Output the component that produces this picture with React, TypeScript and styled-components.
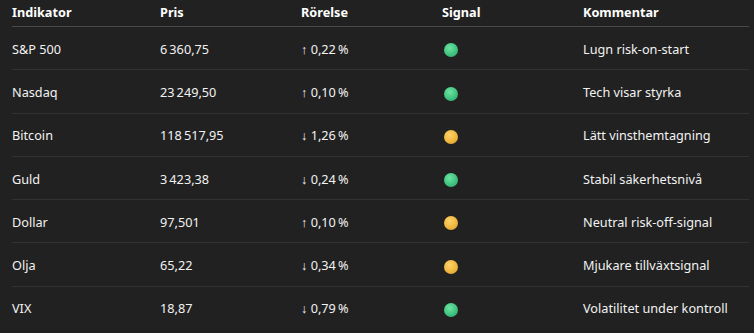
import React from "react";
import styled, { createGlobalStyle } from "styled-components";

const GlobalStyle = createGlobalStyle`
  html, body {
    margin: 0;
    padding: 0;
    background: #212121;
  }
  body {
    font-family: "Noto Sans", "Open Sans", sans-serif;
    color: #f2f2f2;
  }
`;

const Wrap = styled.div`
  padding: 0 5px 0 12px;
`;

const Table = styled.table`
  width: 737px;
  border-collapse: collapse;
  font-size: 12.7px;
  table-layout: fixed;
`;

const Th = styled.th<{ $w: number }>`
  width: ${(p) => p.$w}px;
  text-align: left;
  font-weight: 700;
  color: #ffffff;
  height: 26px;
  padding: 0;
  vertical-align: top;
  line-height: 24px;
  border-bottom: 1px solid #484848;
`;

const Td = styled.td`
  height: 41.3px;
  padding: 1px 0 0 0;
  line-height: 18px;
  vertical-align: middle;
  border-bottom: 1px solid #323232;

  tr:last-child > & {
    border-bottom: none;
  }
`;

const Arrow = styled.span`
  font-weight: 700;
`;

const Dot = styled.span<{ $tone: "green" | "yellow" }>`
  display: inline-block;
  width: 14px;
  height: 14px;
  margin-left: 2px;
  border-radius: 50%;
  vertical-align: middle;
  background: ${(p) =>
    p.$tone === "green"
      ? "radial-gradient(circle at 40% 35%, #6fe3a4 0%, #3fc47f 55%, #2a9e63 100%)"
      : "radial-gradient(circle at 40% 35%, #fcd36a 0%, #f0b63d 55%, #d39528 100%)"};
`;

type Row = {
  name: string;
  price: string;
  up: boolean;
  change: string;
  tone: "green" | "yellow";
  comment: string;
};

const rows: Row[] = [
  { name: "S&P 500", price: "6\u202F360,75", up: true, change: "0,22\u202F%", tone: "green", comment: "Lugn risk-on-start" },
  { name: "Nasdaq", price: "23\u202F249,50", up: true, change: "0,10\u202F%", tone: "green", comment: "Tech visar styrka" },
  { name: "Bitcoin", price: "118\u202F517,95", up: false, change: "1,26\u202F%", tone: "yellow", comment: "Lätt vinsthemtagning" },
  { name: "Guld", price: "3\u202F423,38", up: false, change: "0,24\u202F%", tone: "green", comment: "Stabil säkerhetsnivå" },
  { name: "Dollar", price: "97,501", up: true, change: "0,10\u202F%", tone: "yellow", comment: "Neutral risk-off-signal" },
  { name: "Olja", price: "65,22", up: false, change: "0,34\u202F%", tone: "yellow", comment: "Mjukare tillväxtsignal" },
  { name: "VIX", price: "18,87", up: false, change: "0,79\u202F%", tone: "green", comment: "Volatilitet under kontroll" },
];

const App = () => (
  <>
    <GlobalStyle />
    <Wrap>
      <Table>
        <thead>
          <tr>
            <Th $w={148}>Indikator</Th>
            <Th $w={141}>Pris</Th>
            <Th $w={141}>Rörelse</Th>
            <Th $w={141}>Signal</Th>
            <Th $w={166}>Kommentar</Th>
          </tr>
        </thead>
        <tbody>
          {rows.map((r) => (
            <tr key={r.name}>
              <Td>{r.name}</Td>
              <Td>{r.price}</Td>
              <Td>
                <Arrow>{r.up ? "↑" : "↓"}</Arrow> {r.change}
              </Td>
              <Td>
                <Dot $tone={r.tone} />
              </Td>
              <Td>{r.comment}</Td>
            </tr>
          ))}
        </tbody>
      </Table>
    </Wrap>
  </>
);

export default App;
